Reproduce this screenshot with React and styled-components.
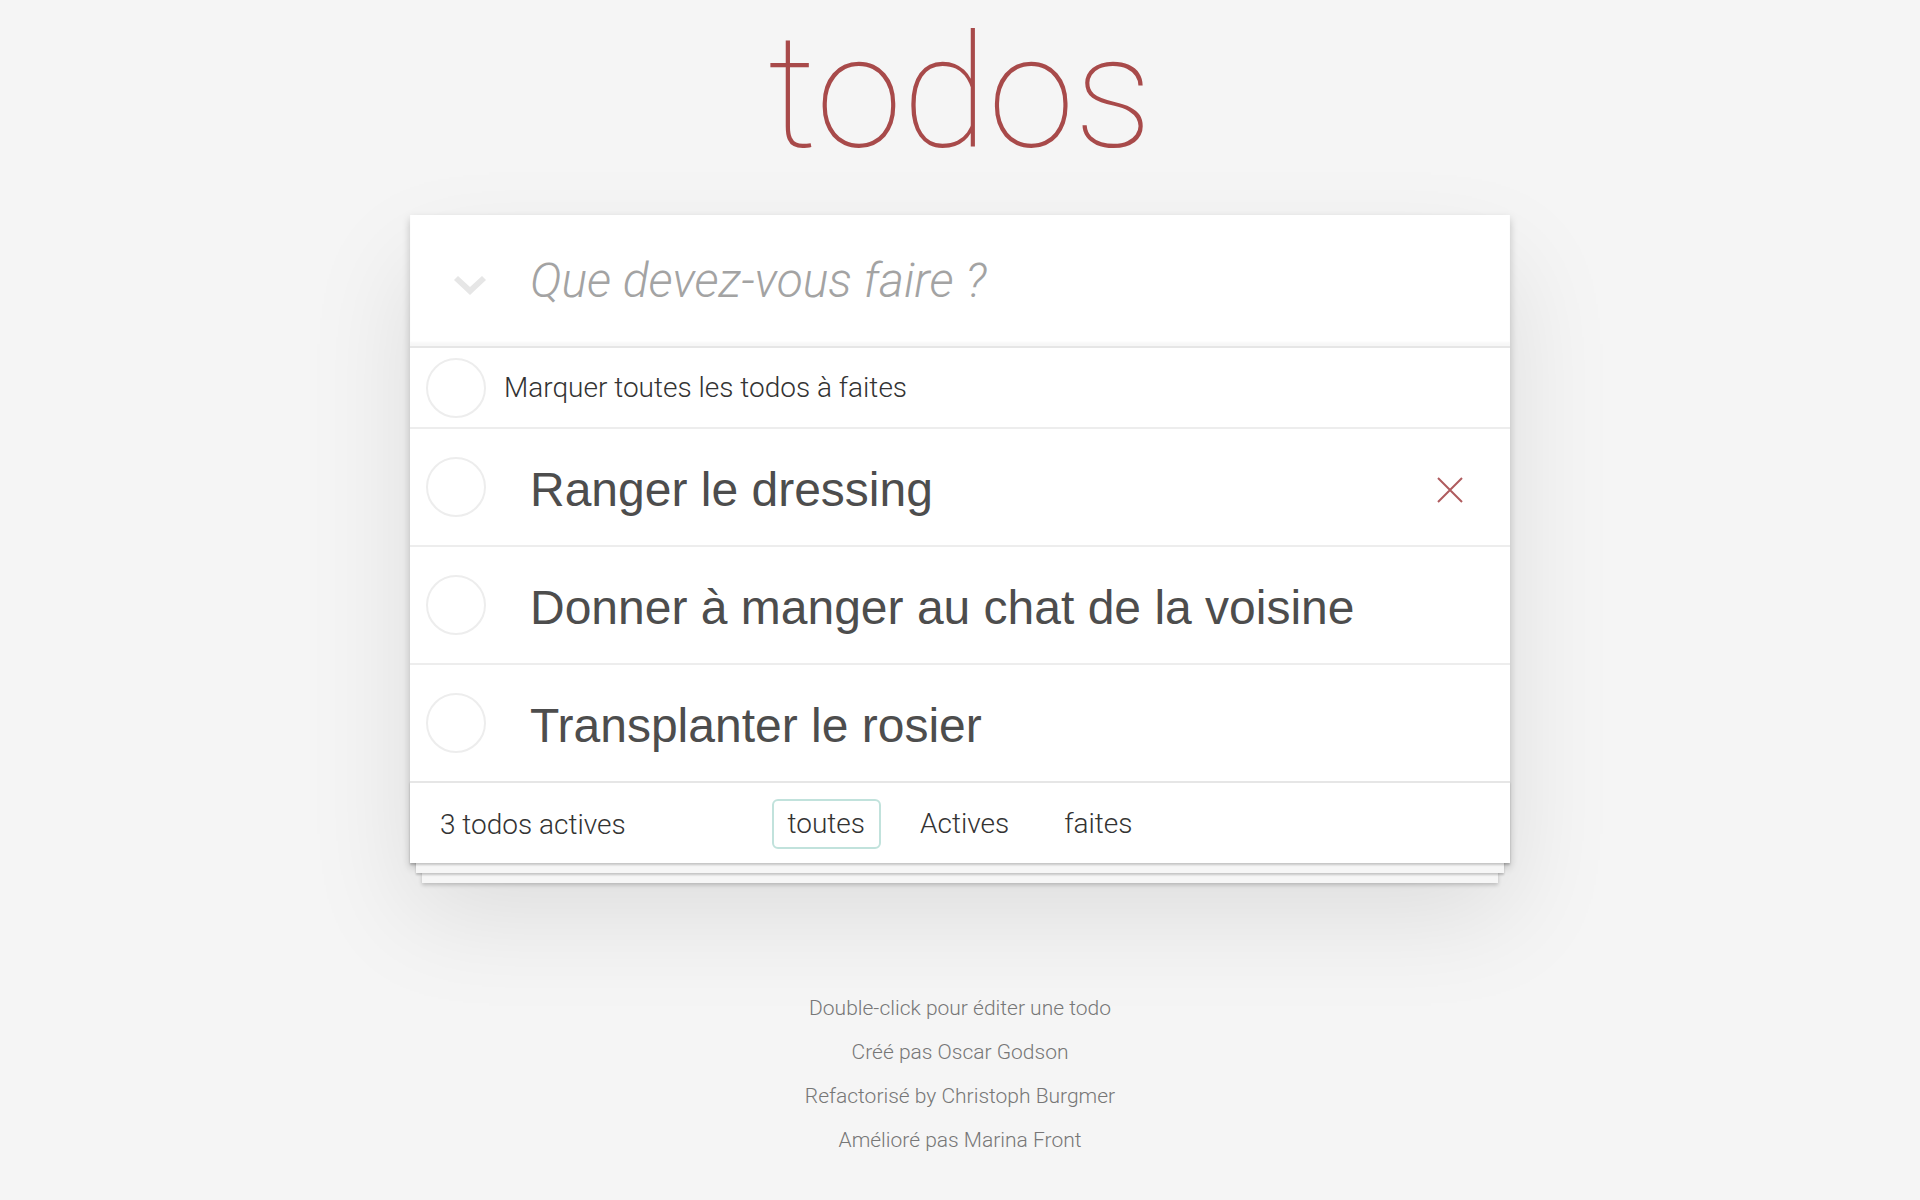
import React from 'react';
import styled, { createGlobalStyle } from 'styled-components';

const GlobalStyle = createGlobalStyle`
  body {
    margin: 0;
    background: #f5f5f5;
    color: #4d4d4d;
    font-family: Roboto, 'Liberation Sans', sans-serif;
    font-weight: 300;
  }
`;

const Page = styled.div`
  width: 1100px;
  margin: 0 auto;
  padding: 14px 0 40px;
`;

const Title = styled.h1`
  margin: 0 0 44px;
  font-family: Roboto, 'Liberation Sans', sans-serif;
  font-size: 157px;
  line-height: 1;
  font-weight: 100;
  text-align: center;
  color: #a84a4a;
`;

const Card = styled.section`
  background: #fff;
  box-shadow: 0 4px 8px 0 rgba(0, 0, 0, 0.2), 0 50px 100px 0 rgba(0, 0, 0, 0.1);
`;

const Header = styled.header`
  display: flex;
  align-items: center;
  height: 131px;
  box-shadow: inset 0 -4px 2px rgba(0, 0, 0, 0.03);
`;

const ToggleAll = styled.span`
  width: 120px;
  display: flex;
  justify-content: center;
  padding-top: 9px;
`;

const NewTodo = styled.input`
  flex: 1;
  border: none;
  outline: none;
  background: transparent;
  padding: 0;
  font-family: Roboto, 'Liberation Sans', sans-serif;
  font-size: 48px;
  font-style: italic;
  font-weight: 300;
  color: #4d4d4d;
  &::placeholder {
    color: #a3a3a3;
    font-style: italic;
  }
`;

const Main = styled.section`
  border-top: 2px solid #e6e6e6;
`;

const Row = styled.div`
  display: flex;
  align-items: center;
  height: ${(p) => p.$height}px;
  border-bottom: 2px solid #ededed;
  &:last-child {
    border-bottom: none;
  }
`;

const Check = styled.span`
  flex-shrink: 0;
  box-sizing: border-box;
  width: 60px;
  height: 60px;
  margin-left: 16px;
  border: 2px solid #ededed;
  border-radius: 50%;
`;

const ToggleLabel = styled.span`
  margin-left: 18px;
  font-size: 28px;
  font-weight: 300;
  color: #333;
`;

const TodoList = styled.ul`
  list-style: none;
  margin: 0;
  padding: 0;
`;

const TodoText = styled.label`
  flex: 1;
  margin-left: 44px;
  padding-top: 5px;
  font-family: 'Liberation Sans', Arial, sans-serif;
  font-size: 48px;
  font-weight: 400;
  line-height: 1.2;
  color: #4d4d4d;
`;

const Destroy = styled.button`
  display: flex;
  padding: 0;
  margin: 6px 47px 0 0;
  border: none;
  background: none;
  cursor: pointer;
`;

const Footer = styled.footer`
  display: grid;
  grid-template-columns: 1fr auto 1fr;
  align-items: center;
  height: 80px;
  padding: 0 30px;
  border-top: 2px solid #e6e6e6;
  font-size: 28px;
  font-weight: 300;
  color: #333;
  background: #fff;
  box-shadow: 0 2px 2px rgba(0, 0, 0, 0.2), 0 16px 0 -6px #f6f6f6,
    0 18px 2px -6px rgba(0, 0, 0, 0.2), 0 32px 0 -12px #f6f6f6,
    0 34px 4px -12px rgba(0, 0, 0, 0.2);
`;

const Count = styled.span`
  justify-self: start;
  padding-top: 2px;
`;

const Filters = styled.ul`
  display: flex;
  gap: 23px;
  list-style: none;
  margin: 0;
  padding: 2px 0 0;
`;

const FilterLink = styled.a`
  display: block;
  padding: 6px 14px;
  line-height: 34px;
  border: 2px solid ${(p) => (p.$selected ? '#c1e2dc' : 'transparent')};
  border-radius: 6px;
  color: #333;
  text-decoration: none;
`;

const Info = styled.footer`
  margin-top: 135px;
  text-align: center;
  font-size: 21px;
  line-height: 1;
  color: #777;
  p {
    margin: 23px 0;
  }
`;

const todos = ['Ranger le dressing', 'Donner à manger au chat de la voisine', 'Transplanter le rosier'];

function Chevron() {
  return (
    <svg width="32" height="19" viewBox="0 0 32 19">
      <path d="M0 4 L4 0 L16 11 L28 0 L32 4 L16 19 Z" fill="#e6e6e6" />
    </svg>
  );
}

function Cross() {
  return (
    <svg width="26" height="26" viewBox="0 0 26 26">
      <path d="M1 1 L25 25 M25 1 L1 25" stroke="#af5b5e" strokeWidth="2" />
    </svg>
  );
}

export default function App() {
  return (
    <Page>
      <GlobalStyle />
      <Title>todos</Title>
      <Card>
        <Header>
          <ToggleAll>
            <Chevron />
          </ToggleAll>
          <NewTodo placeholder="Que devez-vous faire ?" />
        </Header>
        <Main>
          <Row $height={79}>
            <Check />
            <ToggleLabel>Marquer toutes les todos à faites</ToggleLabel>
          </Row>
          <TodoList>
            {todos.map((t, i) => (
              <Row as="li" key={t} $height={116}>
                <Check />
                <TodoText>{t}</TodoText>
                {i === 0 && (
                  <Destroy>
                    <Cross />
                  </Destroy>
                )}
              </Row>
            ))}
          </TodoList>
        </Main>
        <Footer>
          <Count>3 todos actives</Count>
          <Filters>
            <li>
              <FilterLink $selected>toutes</FilterLink>
            </li>
            <li>
              <FilterLink>Actives</FilterLink>
            </li>
            <li>
              <FilterLink>faites</FilterLink>
            </li>
          </Filters>
        </Footer>
      </Card>
      <Info>
        <p>Double-click pour éditer une todo</p>
        <p>Créé pas Oscar Godson</p>
        <p>Refactorisé by Christoph Burgmer</p>
        <p>Amélioré pas Marina Front</p>
      </Info>
    </Page>
  );
}
